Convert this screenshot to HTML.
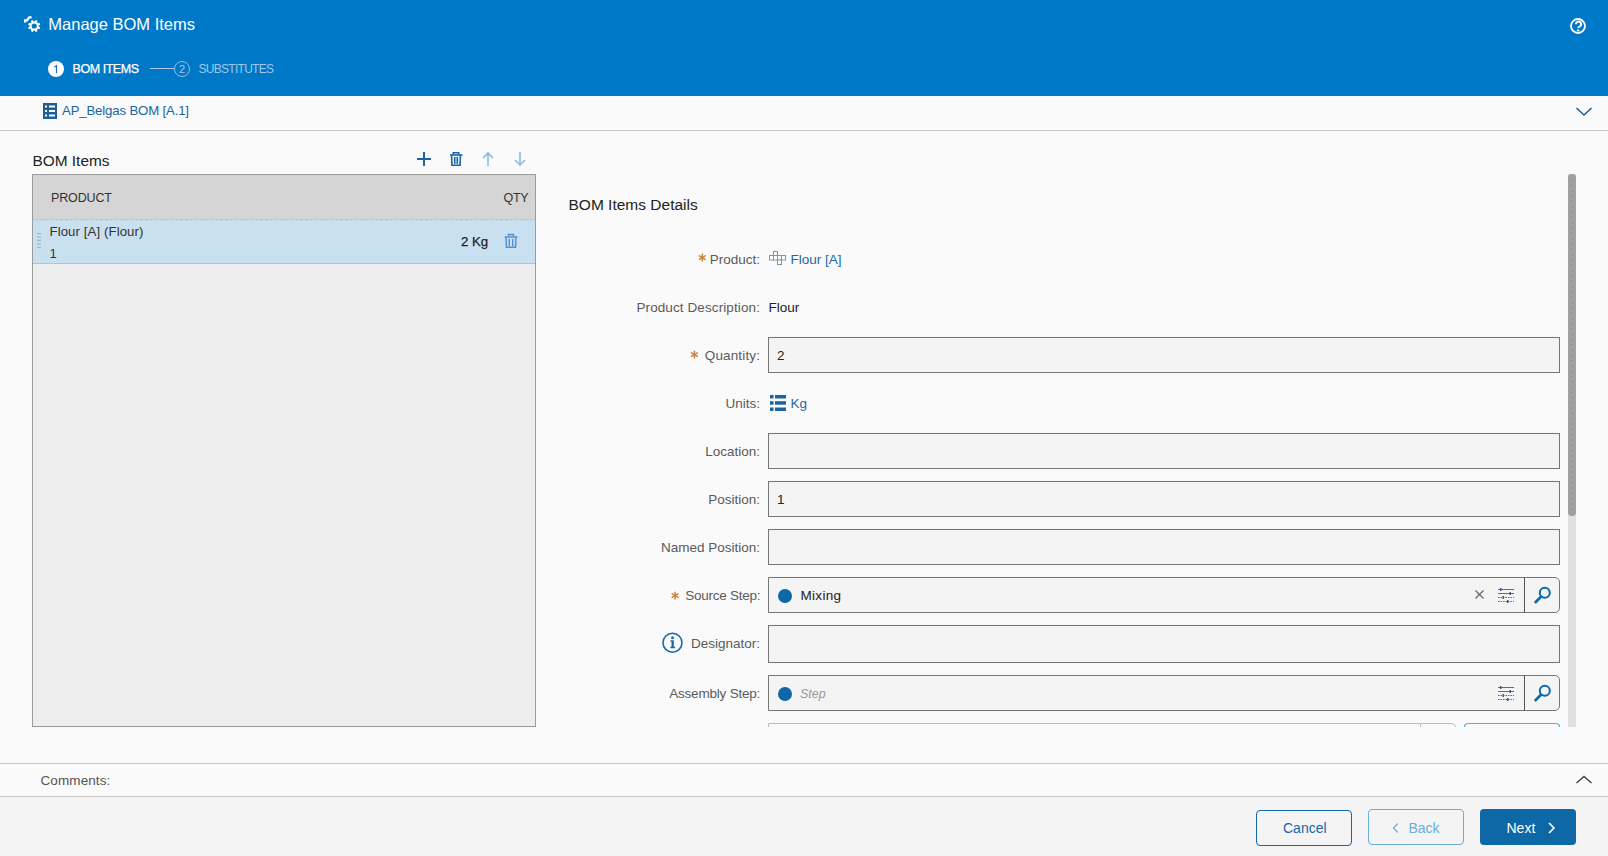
<!DOCTYPE html>
<html><head><meta charset="utf-8">
<style>
*{box-sizing:border-box;margin:0;padding:0}
html,body{width:1608px;height:856px;overflow:hidden;background:#FAFAFA;font-family:"Liberation Sans",sans-serif;color:#333}
.a{position:absolute}
.t{position:absolute;white-space:nowrap;line-height:1}
svg{position:absolute;overflow:visible}
svg text{font-family:"Liberation Sans",sans-serif}
#hdr{left:0;top:0;width:1608px;height:96px;background:#0078C8}
#sub{left:0;top:96px;width:1608px;height:35px;background:#FAFAFA;border-bottom:1px solid #CBCBCB}
.lbl{position:absolute;right:848px;white-space:nowrap;line-height:1;font-size:13.5px;color:#5A5A5A;text-align:right}
.req{color:#B97A3A;margin-right:3px}
.inp{position:absolute;left:768px;width:792px;height:36px;background:#F4F4F4;border:1px solid #767676}
.val{position:absolute;white-space:nowrap;line-height:1;font-size:13.5px;color:#222}
#tbl{left:32px;top:174px;width:504px;height:553px;border:1px solid #9B9B9B;background:#EDEDED}
#foot{left:0;top:797px;width:1608px;height:59px;background:#F4F4F4}
.btn{position:absolute;height:36px;width:96px;border-radius:4px}
</style></head><body>

<!-- HEADER -->
<div id="hdr" class="a"></div>
<svg style="left:0;top:0" width="1608" height="96">
  <!-- gear -->
  <g fill="#fff">
    <circle cx="34.2" cy="26" r="4.7"/>
    <g stroke="#fff" stroke-width="2.2" transform="rotate(22.5 34.2 26)">
      <line x1="34.2" y1="19.9" x2="34.2" y2="32.1"/>
      <line x1="28.1" y1="26" x2="40.3" y2="26"/>
      <line x1="29.9" y1="21.7" x2="38.5" y2="30.3"/>
      <line x1="38.5" y1="21.7" x2="29.9" y2="30.3"/>
    </g>
    <circle cx="34.2" cy="26" r="2.6" fill="#0078C8"/>
    <path d="M25.1 22.6 V20.4 H26.9 L29.2 17.3 H31.6" fill="none" stroke="#fff" stroke-width="2.3"/>
  </g>
  <!-- help -->
  <circle cx="1578" cy="26" r="7" fill="none" stroke="#fff" stroke-width="1.8"/>
  <path d="M1575.9 24.2 a2.6 2.5 0 1 1 3.9 2.1 c-1 .5 -1.6 .8 -1.6 1.6" fill="none" stroke="#fff" stroke-width="2"/><circle cx="1578.2" cy="30.4" r="1.15" fill="#fff"/>
  <!-- stepper -->
  <circle cx="56" cy="69" r="8" fill="#fff"/>
  <path d="M56.5 73.2 V65.6 L54.3 67.2" fill="none" stroke="#1F6CB0" stroke-width="1.1"/>
  <line x1="150" y1="68.5" x2="174" y2="68.5" stroke="#A6CDEB" stroke-width="1"/>
  <circle cx="182" cy="69" r="7.5" fill="none" stroke="#8CBFE6" stroke-width="1"/>
  <text x="182" y="73" fill="#A6CDEB" font-size="11" text-anchor="middle">2</text>
</svg>
<div class="t" style="left:48.3px;top:16px;font-size:16.5px;color:#fff">Manage BOM Items</div>
<div class="t" style="left:72.5px;top:63px;font-size:12.5px;color:#fff;letter-spacing:-0.45px;-webkit-text-stroke:0.25px #fff">BOM ITEMS</div>
<div class="t" style="left:198.5px;top:63px;font-size:12px;color:#9CC8EA;letter-spacing:-0.72px">SUBSTITUTES</div>

<!-- SUBHEADER -->
<div id="sub" class="a"></div>
<svg style="left:0;top:96px" width="1608" height="34">
  <rect x="43" y="7" width="14" height="16" fill="#1B5E98"/>
  <g fill="#fff">
    <rect x="45" y="9.5" width="2" height="2"/><rect x="49" y="9.5" width="6" height="2"/>
    <rect x="45" y="14" width="2" height="2"/><rect x="49" y="14" width="6" height="2"/>
    <rect x="45" y="18.5" width="2" height="2"/><rect x="49" y="18.5" width="6" height="2"/>
  </g>
  <polyline points="1576.5,12 1584,19 1591.5,12" fill="none" stroke="#1D5F96" stroke-width="1.5"/>
</svg>
<div class="t" style="left:62px;top:104px;font-size:13.2px;letter-spacing:-0.15px;color:#1B64A0">AP_Belgas BOM [A.1]</div>

<!-- LEFT: BOM ITEMS -->
<div class="t" style="left:32.5px;top:153px;font-size:15.4px;color:#222">BOM Items</div>
<svg style="left:0;top:140px" width="560" height="34">
  <g stroke="#1565A8" stroke-width="2">
    <line x1="424" y1="12" x2="424" y2="26"/><line x1="417" y1="19" x2="431" y2="19"/>
  </g>
  <g fill="none" stroke="#1565A8" stroke-width="1.6">
    <line x1="450" y1="15" x2="462.5" y2="15"/>
    <path d="M453.3 14.5 V12.8 h5.4 V14.5"/>
    <path d="M451.6 15.5 L451.9 25.2 H460.1 L460.4 15.5"/>
    <line x1="454.7" y1="17" x2="454.7" y2="24"/><line x1="457.3" y1="17" x2="457.3" y2="24"/>
  </g>
  <g fill="none" stroke="#8ABCE0" stroke-width="1.6">
    <line x1="488" y1="13" x2="488" y2="26"/><polyline points="483,18 488,13 493,18"/>
    <line x1="520" y1="12" x2="520" y2="25"/><polyline points="515,20 520,25 525,20"/>
  </g>
</svg>

<div id="tbl" class="a">
  <div class="a" style="left:0;top:0;width:502px;height:45px;background:#D5D5D5;border-bottom:1px solid #C6C6C6"></div>
  <div class="a" style="left:0;top:45px;width:502px;height:44px;background:#C9E0F0;border-bottom:1px solid #AAC7D8"></div>
  <div class="a" style="left:0;top:45px;width:502px;height:1px;background:repeating-linear-gradient(90deg,#C9E0F0 0 3px,#B3CADB 3px 4px,#C9E0F0 4px 5px)"></div>
</div>
<div class="t" style="left:51px;top:192px;font-size:12.5px;letter-spacing:-0.15px;color:#333">PRODUCT</div>
<div class="t" style="left:503.5px;top:192px;font-size:12.5px;letter-spacing:-0.3px;color:#333">QTY</div>
<div class="t" style="left:49.5px;top:225px;font-size:13.2px;letter-spacing:0.1px;color:#333">Flour [A] (Flour)</div>
<div class="t" style="left:49.5px;top:247px;font-size:13px;color:#333">1</div>
<div class="t" style="left:461px;top:235px;font-size:13.2px;color:#222;-webkit-text-stroke:0.25px #222">2 Kg</div>
<svg style="left:0;top:220px" width="560" height="44">
  <g fill="none" stroke="#8A9AA6" stroke-width="0.8">
    <path d="M37 13.5 q1 -1 2 0 t2 0"/><path d="M37 17 q1 -1 2 0 t2 0"/><path d="M37 20.5 q1 -1 2 0 t2 0"/><path d="M37 24 q1 -1 2 0 t2 0"/><path d="M37 27.5 q1 -1 2 0 t2 0"/>
  </g>
  <g fill="none" stroke="#4A8FD0" stroke-width="1.4">
    <line x1="504.5" y1="17" x2="517.5" y2="17"/>
    <path d="M508.5 16.5 V14.5 h5 V16.5"/>
    <path d="M506.1 17.5 L506.4 27.3 H515.6 L515.9 17.5"/>
    <line x1="509.3" y1="19" x2="509.3" y2="26"/><line x1="512.7" y1="19" x2="512.7" y2="26"/>
  </g>
</svg>

<!-- DETAILS -->
<div class="t" style="left:568.5px;top:197px;font-size:15.5px;color:#222">BOM Items Details</div>

<div class="lbl" style="top:253px">Product:</div>
<svg style="left:768px;top:250px" width="20" height="16">
  <g fill="#fff" stroke="#7F95AB" stroke-width="1">
    <rect x="1.5" y="5.5" width="4" height="4.5"/><rect x="5.5" y="5.5" width="4" height="4.5"/><rect x="9.5" y="5.5" width="4" height="4.5"/><rect x="13.5" y="5.5" width="4" height="4.5"/>
    <rect x="5.5" y="1.5" width="4" height="4"/><rect x="9.5" y="10" width="4" height="4.5"/>
  </g>
</svg>
<div class="val" style="left:790.5px;top:253px;color:#1B6AA8">Flour [A]</div>

<div class="lbl" style="top:301px;letter-spacing:0.1px">Product Description:</div>
<div class="val" style="left:768.5px;top:301px">Flour</div>

<div class="lbl" style="top:349px;letter-spacing:0.15px;margin-right:-0.15px">Quantity:</div>
<div class="inp" style="top:337px"></div>
<div class="val" style="left:777px;top:349px">2</div>

<div class="lbl" style="top:397px">Units:</div>
<svg style="left:770px;top:395px" width="16" height="16">
  <g fill="#1B63A0">
    <rect x="0" y="0" width="3.5" height="3.5"/><rect x="5" y="0" width="11" height="3.5"/>
    <rect x="0" y="6.2" width="3.5" height="3.5"/><rect x="5" y="6.2" width="11" height="3.5"/>
    <rect x="0" y="12.5" width="3.5" height="3.5"/><rect x="5" y="12.5" width="11" height="3.5"/>
  </g>
</svg>
<div class="val" style="left:790.5px;top:397px;color:#1B6AA8">Kg</div>

<div class="lbl" style="top:445px">Location:</div>
<div class="inp" style="top:433px"></div>

<div class="lbl" style="top:493px">Position:</div>
<div class="inp" style="top:481px"></div>
<div class="val" style="left:777px;top:493px">1</div>

<div class="lbl" style="top:541px">Named Position:</div>
<div class="inp" style="top:529px"></div>

<div class="lbl" style="top:589px;letter-spacing:-0.25px;margin-right:-0.25px">Source Step:</div>
<div class="inp" style="top:577px;border-radius:0 5px 5px 0"></div>
<div class="val" style="left:800.5px;top:589px;letter-spacing:0.3px">Mixing</div>

<div class="lbl" style="top:637px">Designator:</div>
<svg style="left:660px;top:631px" width="24" height="24">
  <circle cx="12.5" cy="11.7" r="9.5" fill="none" stroke="#1B6AA8" stroke-width="1.6"/>
  <circle cx="12.5" cy="6.8" r="1.5" fill="#1B6AA8"/>
  <path d="M10.5 9.3 h3.3 v6.5 h1.3 v1.5 h-4.8 v-1.5 h1.2 v-5 h-1 z" fill="#1B6AA8"/>
</svg>
<div class="inp" style="top:625px;height:38px"></div>

<div class="lbl" style="top:687px;letter-spacing:-0.2px;margin-right:-0.2px">Assembly Step:</div>
<div class="inp" style="top:675px;border-radius:0 5px 5px 0"></div>
<div class="val" style="left:800px;top:688px;color:#9A9A9A;font-style:italic;font-size:12.5px">Step</div>

<svg style="left:0;top:0" width="1608" height="856">
  <!-- asterisks -->
  <g stroke="#C8843C" stroke-width="1.5" stroke-linecap="round">
    <g transform="translate(702.3 257.6)"><line x1="0" y1="-3.4" x2="0" y2="3.4"/><line x1="-2.95" y1="-1.7" x2="2.95" y2="1.7"/><line x1="-2.95" y1="1.7" x2="2.95" y2="-1.7"/></g>
    <g transform="translate(694.4 354.6)"><line x1="0" y1="-3.4" x2="0" y2="3.4"/><line x1="-2.95" y1="-1.7" x2="2.95" y2="1.7"/><line x1="-2.95" y1="1.7" x2="2.95" y2="-1.7"/></g>
    <g transform="translate(675.1 595.6)"><line x1="0" y1="-3.4" x2="0" y2="3.4"/><line x1="-2.95" y1="-1.7" x2="2.95" y2="1.7"/><line x1="-2.95" y1="1.7" x2="2.95" y2="-1.7"/></g>
  </g>
  <circle cx="785" cy="596" r="7" fill="#0E67A6"/>
  <circle cx="785" cy="694" r="7" fill="#0E67A6"/>
  <!-- source step controls -->
  <g stroke="#6A6A6A" stroke-width="1.3"><line x1="1475.5" y1="590.5" x2="1483.5" y2="598.5"/><line x1="1483.5" y1="590.5" x2="1475.5" y2="598.5"/></g>
  <g stroke="#6A6A6A" stroke-width="1">
    <line x1="1498" y1="589.5" x2="1514" y2="589.5"/><line x1="1498" y1="593.5" x2="1514" y2="593.5"/>
    <line x1="1498" y1="597.5" x2="1514" y2="597.5" stroke-dasharray="1.5 1"/><line x1="1498" y1="601.5" x2="1514" y2="601.5" stroke-dasharray="1.5 1"/>
  </g>
  <g fill="#3B5C80"><rect x="1500" y="588" width="1.5" height="3"/><rect x="1509.5" y="592" width="1.5" height="3"/><rect x="1502.5" y="596" width="1.5" height="3"/><rect x="1507" y="600" width="1.5" height="3"/></g>
  <line x1="1524.5" y1="577" x2="1524.5" y2="613" stroke="#555" stroke-width="1"/>
  <g fill="none" stroke="#0E67A6"><circle cx="1544.8" cy="592.8" r="5" stroke-width="2"/><line x1="1541" y1="596.8" x2="1535.5" y2="602.2" stroke-width="2.6" stroke-linecap="round"/></g>
  <!-- assembly step controls -->
  <g stroke="#6A6A6A" stroke-width="1">
    <line x1="1498" y1="687.5" x2="1514" y2="687.5"/><line x1="1498" y1="691.5" x2="1514" y2="691.5"/>
    <line x1="1498" y1="695.5" x2="1514" y2="695.5" stroke-dasharray="1.5 1"/><line x1="1498" y1="699.5" x2="1514" y2="699.5" stroke-dasharray="1.5 1"/>
  </g>
  <g fill="#3B5C80"><rect x="1500" y="686" width="1.5" height="3"/><rect x="1509.5" y="690" width="1.5" height="3"/><rect x="1502.5" y="694" width="1.5" height="3"/><rect x="1507" y="698" width="1.5" height="3"/></g>
  <line x1="1524.5" y1="675" x2="1524.5" y2="711" stroke="#555" stroke-width="1"/>
  <g fill="none" stroke="#0E67A6"><circle cx="1544.8" cy="690.8" r="5" stroke-width="2"/><line x1="1541" y1="694.8" x2="1535.5" y2="700.2" stroke-width="2.6" stroke-linecap="round"/></g>
  <!-- partial row -->
  <path d="M768.5 727 V723.5 H1451 q4 0 5 3.5" fill="none" stroke="#BDBDBD" stroke-width="1"/>
  <line x1="1420.5" y1="723" x2="1420.5" y2="727" stroke="#BDBDBD"/>
  <path d="M1464.5 727 q0 -3.5 4 -3.5 H1555.5 q4 0 4 3.5" fill="none" stroke="#5AAAE0" stroke-width="1.2"/>
  <!-- scrollbar -->
  <rect x="1568" y="174" width="8" height="553" fill="#E0E0E0"/>
  <rect x="1568" y="174" width="8" height="342" rx="3.5" fill="#A0A0A0"/>
  <g fill="#7E7E7E"><rect x="1571" y="180.0" width="1" height="1"/><rect x="1571" y="185.3" width="1" height="1"/><rect x="1572" y="190.6" width="1" height="1"/><rect x="1571" y="195.9" width="1" height="1"/><rect x="1571" y="201.2" width="1" height="1"/><rect x="1572" y="206.5" width="1" height="1"/><rect x="1571" y="211.8" width="1" height="1"/><rect x="1571" y="217.1" width="1" height="1"/><rect x="1572" y="222.4" width="1" height="1"/><rect x="1571" y="227.7" width="1" height="1"/><rect x="1571" y="233.0" width="1" height="1"/><rect x="1572" y="238.3" width="1" height="1"/><rect x="1571" y="243.6" width="1" height="1"/><rect x="1571" y="248.9" width="1" height="1"/><rect x="1572" y="254.2" width="1" height="1"/><rect x="1571" y="259.5" width="1" height="1"/><rect x="1571" y="264.8" width="1" height="1"/><rect x="1572" y="270.1" width="1" height="1"/><rect x="1571" y="275.4" width="1" height="1"/><rect x="1571" y="280.7" width="1" height="1"/><rect x="1572" y="286.0" width="1" height="1"/><rect x="1571" y="291.3" width="1" height="1"/><rect x="1571" y="296.6" width="1" height="1"/><rect x="1572" y="301.9" width="1" height="1"/><rect x="1571" y="307.2" width="1" height="1"/><rect x="1571" y="312.5" width="1" height="1"/><rect x="1572" y="317.8" width="1" height="1"/><rect x="1571" y="323.1" width="1" height="1"/><rect x="1571" y="328.4" width="1" height="1"/><rect x="1572" y="333.7" width="1" height="1"/><rect x="1571" y="339.0" width="1" height="1"/><rect x="1571" y="344.3" width="1" height="1"/><rect x="1572" y="349.6" width="1" height="1"/><rect x="1571" y="354.9" width="1" height="1"/><rect x="1571" y="360.2" width="1" height="1"/><rect x="1572" y="365.5" width="1" height="1"/><rect x="1571" y="370.8" width="1" height="1"/><rect x="1571" y="376.1" width="1" height="1"/><rect x="1572" y="381.4" width="1" height="1"/><rect x="1571" y="386.7" width="1" height="1"/><rect x="1571" y="392.0" width="1" height="1"/><rect x="1572" y="397.3" width="1" height="1"/><rect x="1571" y="402.6" width="1" height="1"/><rect x="1571" y="407.9" width="1" height="1"/><rect x="1572" y="413.2" width="1" height="1"/><rect x="1571" y="418.5" width="1" height="1"/><rect x="1571" y="423.8" width="1" height="1"/><rect x="1572" y="429.1" width="1" height="1"/><rect x="1571" y="434.4" width="1" height="1"/><rect x="1571" y="439.7" width="1" height="1"/><rect x="1572" y="445.0" width="1" height="1"/><rect x="1571" y="450.3" width="1" height="1"/><rect x="1571" y="455.6" width="1" height="1"/><rect x="1572" y="460.9" width="1" height="1"/><rect x="1571" y="466.2" width="1" height="1"/><rect x="1571" y="471.5" width="1" height="1"/><rect x="1572" y="476.8" width="1" height="1"/><rect x="1571" y="482.1" width="1" height="1"/><rect x="1571" y="487.4" width="1" height="1"/><rect x="1572" y="492.7" width="1" height="1"/><rect x="1571" y="498.0" width="1" height="1"/><rect x="1571" y="503.3" width="1" height="1"/><rect x="1572" y="508.6" width="1" height="1"/></g>
</svg>

<!-- COMMENTS -->
<div class="a" style="left:0;top:763px;width:1608px;height:34px;border-top:1px solid #C8C8C8;border-bottom:1px solid #C8C8C8;background:#FAFAFA"></div>
<div class="t" style="left:40.5px;top:774px;font-size:13.5px;letter-spacing:0.1px;color:#555">Comments:</div>
<svg style="left:0;top:763px" width="1608" height="34">
  <polyline points="1576.5,20 1584,13.5 1591.5,20" fill="none" stroke="#444" stroke-width="1.4"/>
</svg>

<!-- FOOTER -->
<div id="foot" class="a"></div>
<div class="btn" style="left:1256px;top:810px;border:1.6px solid #1467A8"></div>
<div class="t" style="left:1283px;top:821px;font-size:14px;color:#1467A8">Cancel</div>
<div class="btn" style="left:1368px;top:809px;border:1.5px solid #6AAEDC"></div>
<div class="t" style="left:1408.5px;top:821px;font-size:14px;color:#6AAEDC">Back</div>
<svg style="left:0;top:797px" width="1608" height="59">
  <polyline points="1397.8,26.5 1393.5,31 1397.8,35.5" fill="none" stroke="#6AAEDC" stroke-width="1.2"/>
</svg>
<div class="btn" style="left:1480px;top:809px;background:#0D68A5"></div>
<div class="t" style="left:1506.5px;top:821px;font-size:14px;color:#fff">Next</div>
<svg style="left:0;top:797px" width="1608" height="59">
  <polyline points="1549,26 1554,31 1549,36" fill="none" stroke="#fff" stroke-width="1.6"/>
</svg>

</body></html>
